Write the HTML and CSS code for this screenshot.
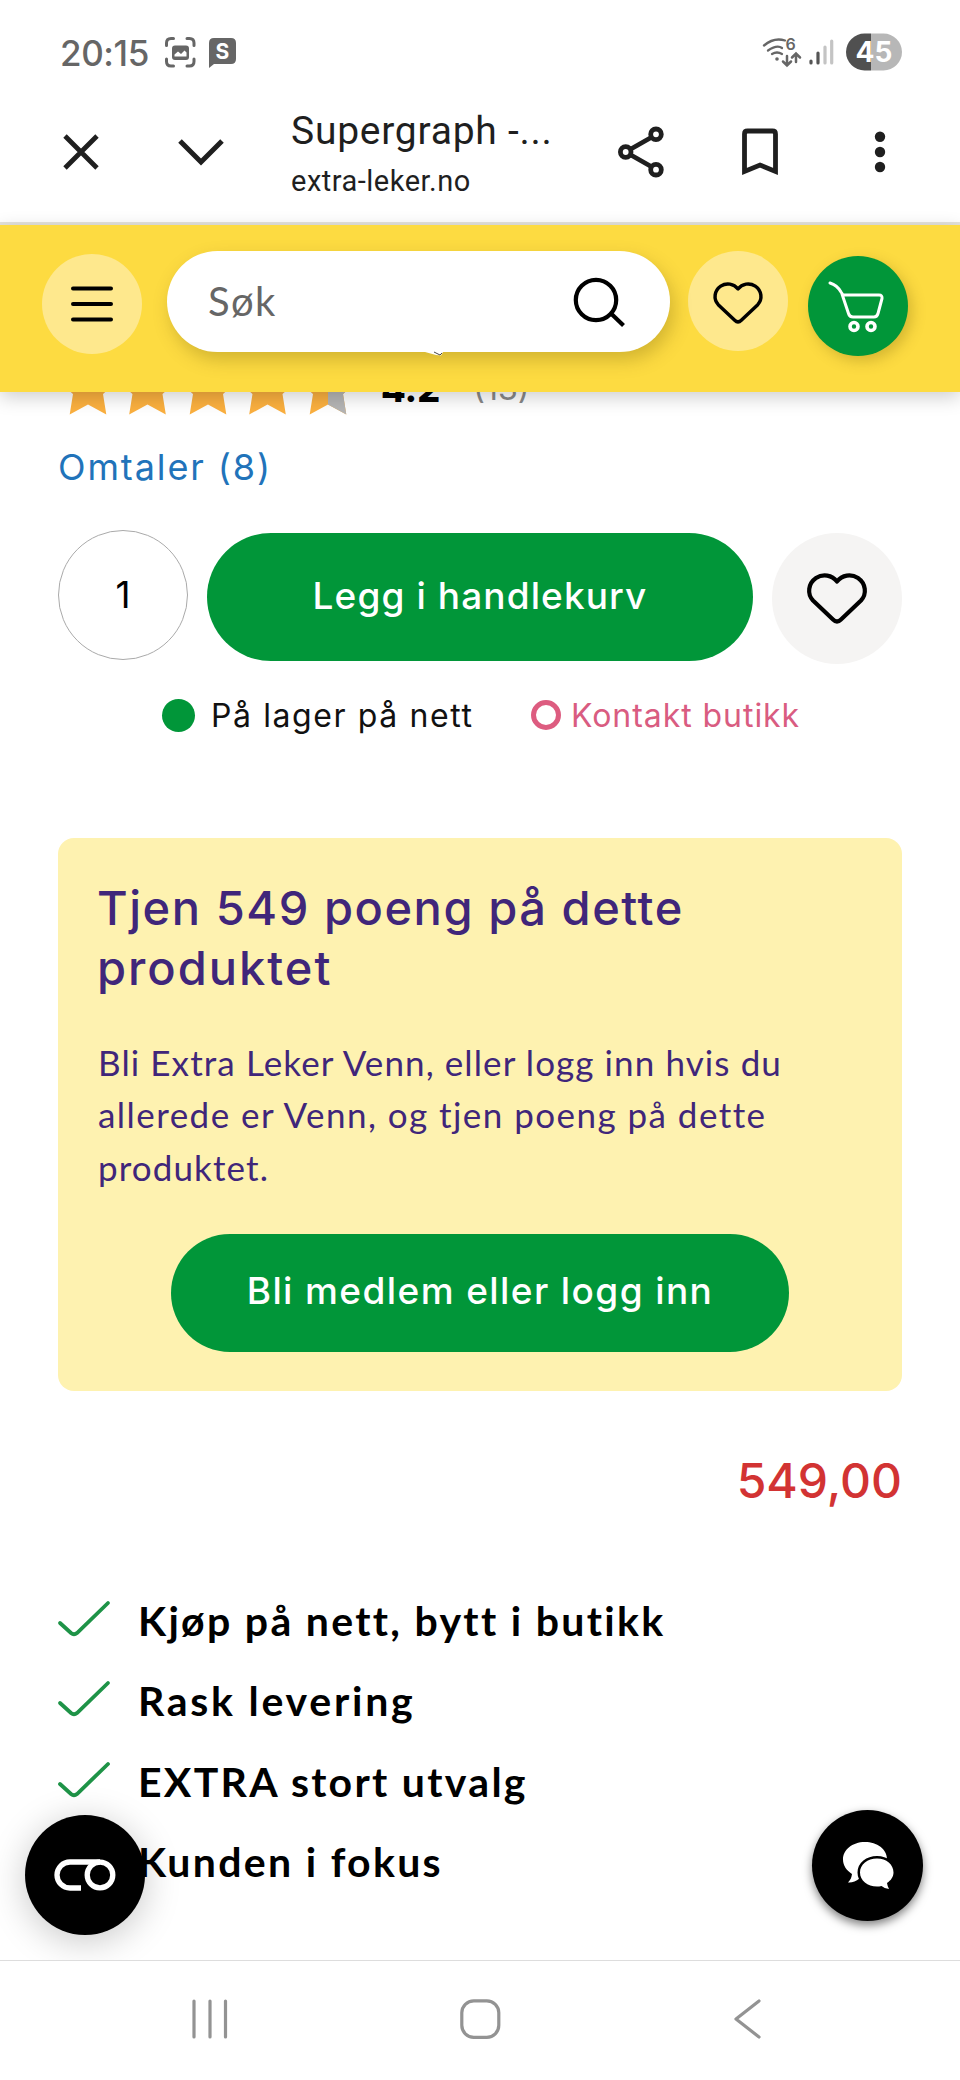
FILE: index.html
```html
<!DOCTYPE html>
<html lang="no">
<head>
<meta charset="utf-8">
<title>Supergraph - Extra Leker</title>
<link rel="stylesheet" href="styles.css">
</head>
<body>
<div class="phone">
  <div class="status">
    <span class="clock">20:15</span>
    <svg class="status-left" width="74" height="34" viewBox="0 0 74 34">
      <g fill="none" stroke="#666" stroke-width="3" stroke-linecap="round"><path d="M2.500 9.500V7q0-4.500 4.500-4.500h2.500M23 2.500h2.500q4.500 0 4.500 4.500v2.500M30 23v2.500q0 4.500-4.500 4.500H23M9.500 30H7q-4.500 0-4.500-4.500V23"/></g>
      <rect x="8" y="9.500" width="17" height="14.500" rx="3" fill="#666"/>
      <path d="M10.500 20.500v-2l3.500-3 3 2.500 3.500-3.500 2 2v4z" fill="#fff"/>
      <path d="M50 2h17q5 0 5 5v16q0 5-5 5H50l-5 4V7q0-5 5-5z" fill="#666"/>
      <text x="58.500" y="22.500" text-anchor="middle" class="badge-s">S</text>
    </svg>
    <svg class="status-right" width="144" height="40" viewBox="0 0 144 40">
      <g fill="none" stroke="#666" stroke-width="2.300" stroke-linecap="round">
        <path d="M3 12.500Q13 4 24 7.500M7 17.500q9-6 14-2.500M11 21q5-3 10 0"/>
        <path d="M26 23v9.500m-4-4 4 4 4-4M35 29v-8.500m-4 4 4-4 4 4" stroke-width="2.500"/>
      </g>
      <circle cx="16" cy="26" r="1.800" fill="#666"/>
      <text x="29.500" y="17" text-anchor="middle" class="wifi-six">6</text>
      <g stroke-width="3.200" stroke-linecap="round"><path d="M50 28v2M57 20v10" stroke="#555"/><path d="M64 14v16M70.700 8v22" stroke="#c4c4c4"/></g>
      <path d="M110 .500h-6.500a18.500 18.500 0 0 0 0 37h6.500z" fill="#505050"/>
      <path d="M110 .500h12.500a18.500 18.500 0 0 1 0 37H110z" fill="#b7b7b7"/>
      <text x="113" y="29" text-anchor="middle" class="battery">45</text>
    </svg>
  </div>

  <div class="toolbar">
    <svg class="tool-close" width="36" height="36" viewBox="0 0 36 36"><path d="M2 2l32 32M34 2L2 34" stroke="#1f1f1f" stroke-width="4.800"/></svg>
    <svg class="tool-down" width="46" height="28" viewBox="0 0 46 28"><path d="M2 3l21 21L44 3" fill="none" stroke="#1f1f1f" stroke-width="5"/></svg>
    <div class="page-id"><div class="page-title">Supergraph -...</div><div class="page-url">extra-leker.no</div></div>
    <svg class="tool-share" width="46" height="52" viewBox="0 0 46 52" fill="none" stroke="#1f1f1f" stroke-width="4.800"><path d="M12 23.500 34 11M12 28.500 34 41"/><circle cx="7.700" cy="26" r="5.300"/><circle cx="38" cy="8.300" r="5.300"/><circle cx="38" cy="43.700" r="5.300"/></svg>
    <svg class="tool-mark" width="36" height="48" viewBox="0 0 36 48"><path d="M2.500 43.500V6q0-3 3-3h25q3 0 3 3v37.500L18 37z" fill="none" stroke="#1f1f1f" stroke-width="4.800"/></svg>
    <svg class="tool-more" width="12" height="42" viewBox="0 0 12 42" fill="#1f1f1f"><circle cx="6" cy="5.700" r="5.200"/><circle cx="6" cy="21" r="5.200"/><circle cx="6" cy="36" r="5.200"/></svg>
  </div>

  <header class="shop-bar">
    <div class="round menu"><svg width="42" height="36" viewBox="0 0 42 36"><path d="M2 2.500h38M2 18h38M2 33.500h38" stroke="#000" stroke-width="4" stroke-linecap="round"/></svg></div>
    <div class="search"><span>Søk</span><svg width="52" height="50" viewBox="0 0 52 50" fill="none" stroke="#000" stroke-width="4.200"><circle cx="23" cy="23" r="20.200"/><path d="M37.500 36 50.500 48.500"/></svg><svg class="under-bit" width="20" height="5" viewBox="0 0 20 5"><path d="M0 0h18l-2 3.500-5-.5z" fill="#fff"/><path d="M9 0l6 3 2-2" fill="none" stroke="#444" stroke-width="1"/></svg></div>
    <div class="round wish"><svg width="50" height="42" viewBox="0 0 60 51"><path class="heart" d="M30 8.500C25 2 16 .500 9 5 1 10.500 0 21 6 27.500L26 46.500q4 4 8 0L54 27.500C60 21 59 10.500 51 5 44 .500 35 2 30 8.500z"/></svg></div>
    <div class="round cart"><svg width="56" height="52" viewBox="0 0 56 52" fill="none" stroke="#fff" stroke-width="3" stroke-linecap="round" stroke-linejoin="round"><path d="M2 3q7 2 11 9l2 3h36q3.500 0 3 3.500l-4 15q-1 3.500-4 3.500H25q-3.500 0-4.500-3.500L14 14"/><circle cx="26" cy="46.500" r="4" stroke-width="3.600"/><circle cx="43" cy="46.500" r="4" stroke-width="3.600"/></svg></div>
  </header>

  <main class="content">
    <div class="rating">
      <svg width="300" height="46" viewBox="0 0 300 46">
        <defs><path id="star" d="M0-12 9 8 30 11 15 24 18.300 44.500 0 34.500-18.300 44.500-15 24-30 11-9 8z"/><clipPath id="right-half"><path d="M0-15h32v62H0z"/></clipPath></defs>
        <g fill="#fbb03f"><use href="#star" x="30"/><use href="#star" x="89.500"/><use href="#star" x="150"/><use href="#star" x="209.500"/><use href="#star" x="270"/></g>
        <g transform="translate(270 0)"><use href="#star" fill="#b5b5b5" clip-path="url(#right-half)"/></g>
      </svg>
      <b class="score">4.2</b><span class="votes">(13)</span>
    </div>
    <a class="reviews">Omtaler (8)</a>
    <div class="buy">
      <div class="qty">1</div>
      <div class="add">Legg i handlekurv</div>
      <div class="save"><svg width="60" height="51" viewBox="0 0 60 51"><path class="heart" d="M30 8.500C25 2 16 .500 9 5 1 10.500 0 21 6 27.500L26 46.500q4 4 8 0L54 27.500C60 21 59 10.500 51 5 44 .500 35 2 30 8.500z"/></svg></div>
    </div>
    <div class="stock"><i class="dot"></i><span class="online">På lager på nett</span><i class="ring"></i><span class="store">Kontakt butikk</span></div>
    <section class="club">
      <h2>Tjen 549 poeng på dette<br><span class="h-end">produktet</span></h2>
      <p><span class="p1">Bli Extra Leker Venn, eller logg inn hvis du</span><br><span class="p2">allerede er Venn, og tjen poeng på dette</span><br><span class="p3">produktet.</span></p>
      <div class="join">Bli medlem eller logg inn</div>
    </section>
    <div class="price">549,00</div>
    <ul class="perks">
      <li><svg width="52" height="38" viewBox="0 0 52 38"><path d="M2 22l11 10q3 2.500 6 0L50 2"/></svg><span class="k1">Kjøp på nett, bytt i butikk</span></li>
      <li><svg width="52" height="38" viewBox="0 0 52 38"><path d="M2 22l11 10q3 2.500 6 0L50 2"/></svg><span class="k2">Rask levering</span></li>
      <li><svg width="52" height="38" viewBox="0 0 52 38"><path d="M2 22l11 10q3 2.500 6 0L50 2"/></svg><span class="k3">EXTRA stort utvalg</span></li>
      <li><svg width="52" height="38" viewBox="0 0 52 38"><path d="M2 22l11 10q3 2.500 6 0L50 2"/></svg><span class="k4">Kunden i fokus</span></li>
    </ul>
    <div class="consent"><svg width="62" height="32" viewBox="0 0 62 32" fill="none" stroke="#fff" stroke-width="5.300"><path d="M46 3H16a13 13 0 0 0 0 26h11"/><circle cx="46" cy="16" r="12.800"/></svg></div>
    <div class="chat"><svg width="52" height="50" viewBox="0 0 52 50"><path d="M23 1C10 1 1 9 1 18.500c0 6 3.500 11 9 14.500-.500 3.500-1.500 6-4 8.500q6 .5 11.500-4C26 38 45 30 45 18 45 8 35 1 23 1z" fill="#fff"/><path d="M35 17.500c-9.500 0-17 6-17 14s7.500 14 17 14c1.500 0 3 0 4.500-.500q3.500 3 7.500 3-1.500-2.500-2-6c4-2.500 6.500-6.500 6.500-10.500 0-8-7-14-16.500-14z" fill="#fff" stroke="#000" stroke-width="5" paint-order="stroke"/></svg></div>
  </main>

  <nav class="system">
    <svg width="38" height="40" viewBox="0 0 38 40" fill="none"><path d="M3 2v36M19 2v36M34.500 2v36"/></svg>
    <svg width="42" height="40" viewBox="0 0 42 40" fill="none"><rect x="1.800" y="1.800" width="37" height="36.500" rx="12"/></svg>
    <svg width="28" height="40" viewBox="0 0 28 40" fill="none"><path d="M26 2 3 20l23 18"/></svg>
  </nav>
</div>
</body>
</html>
```

FILE: styles.css
```css
* { box-sizing: border-box; }
body { margin: 0; background: #fff; font-family: Inter, "Open Sans", sans-serif; color: #000; }
svg { display: block; flex: none; overflow: visible; }
.phone { width: 960px; height: 2080px; overflow: hidden; display: flex; flex-direction: column; white-space: nowrap; }

.status { height: 80px; flex: none; display: flex; padding: 33px 55px 0 60px; color: #666; }
.clock { width: 104px; font-size: 35px; line-height: 40px; font-weight: 500; letter-spacing: -.4px; }
.status-left { margin-top: 3px; }
.status-right { margin: 0 0 0 auto; }
.badge-s { font: 700 21px Inter, sans-serif; fill: #fff; }
.wifi-six { font: 600 16px Inter, sans-serif; fill: #666; }
.battery { font: 700 28px Inter, sans-serif; fill: #fff; }

.toolbar { height: 145px; flex: none; display: flex; align-items: flex-start; padding-left: 63px; border-bottom: 3px solid #e4e3dd; color: #1f1f1f; font-family: Roboto, sans-serif; }
.tool-close { margin-top: 54px; }
.tool-down { margin: 58px 0 0 79px; }
.page-id { width: 327px; margin: 28px 0 0 67px; }
.page-title { font-size: 39px; line-height: 46px; letter-spacing: .75px; }
.page-url { font-size: 29px; line-height: 36px; margin-top: 9px; letter-spacing: .5px; }
.tool-share { margin-top: 46px; }
.tool-mark { margin: 48px 0 0 78px; }
.tool-more { margin: 51px 0 0 96px; }

.shop-bar { position: relative; z-index: 2; height: 167px; flex: none; display: flex; align-items: flex-start; padding-left: 42px; background: #fddb41; box-shadow: 0 5px 18px rgba(0,0,0,.2); }
.round { width: 100px; height: 100px; border-radius: 50%; display: flex; align-items: center; justify-content: center; background: #fee88d; }
.menu { margin-top: 29px; }
.search { position: relative; width: 503px; height: 101px; margin: 26px 0 0 25px; padding: 0 45px 0 41px; border-radius: 51px; background: #fff; display: flex; align-items: center; justify-content: space-between; color: #666; font: 40px/48px Lato, sans-serif; letter-spacing: 1.400px; box-shadow: 4px 8px 18px rgba(90,70,0,.26); }
.search span { margin-top: -2px; }
.under-bit { position: absolute; left: 258px; top: 101px; }
.wish { margin: 26px 0 0 18px; padding-top: 3px; }
.heart { fill: none; stroke: #000; stroke-width: 4.200; stroke-linejoin: round; }
.cart { margin: 31px 0 0 20px; padding-right: 4px; background: #019639; box-shadow: 4px 5px 14px rgba(90,70,0,.25); }

.content { position: relative; flex: 1; padding: 0 58px; }
.rating { display: flex; height: 24px; align-items: flex-end; }
.score { margin-left: 23px; font-size: 36px; line-height: 40px; font-weight: 800; margin-bottom: 7px; }
.votes { margin: 0 0 9px 33px; font-size: 32px; line-height: 36px; color: #888; }
.reviews { display: block; margin-top: 29px; font-size: 36px; line-height: 44px; color: #2173ba; letter-spacing: 1.900px; }
.buy { margin-top: 41px; display: flex; align-items: flex-start; }
.qty { width: 130px; height: 130px; border: 1.500px solid #aaa; border-radius: 50%; text-align: center; font-size: 37px; line-height: 128px; }
.add { width: 546px; height: 128px; margin: 3px 19px 0; border-radius: 64px; background: #019639; color: #fff; font-size: 37px; line-height: 126px; font-weight: 500; text-align: center; letter-spacing: 1.100px; }
.save { width: 130px; height: 131px; margin-top: 3px; border-radius: 50%; background: #f5f4f3; display: flex; align-items: center; justify-content: center; }
.stock { height: 40px; margin-top: 31px; padding-left: 104px; display: flex; align-items: center; font-size: 32px; color: #111; }
.dot { width: 33px; height: 33px; border-radius: 50%; background: #019639; }
.online { width: 318px; padding-left: 16px; letter-spacing: 1.600px; }
.ring { width: 30px; height: 30px; margin-left: 18px; border: 5px solid #dd5c80; border-radius: 50%; }
.store { margin-left: 10px; color: #d95c81; letter-spacing: .95px; }

.club { height: 553px; margin-top: 103px; padding: 40px 40px 0; border-radius: 16px; background: #fef2b0; color: #40267a; }
h2 { margin: 0 0 0 -1px; font-size: 47px; line-height: 59.500px; font-weight: 500; letter-spacing: 1.550px; }
.h-end { letter-spacing: 2px; }
p { margin: 39px 0 0; font: 35px/52.400px Lato, sans-serif; letter-spacing: 1.100px; }
.p2 { letter-spacing: 1.450px; }
.join { width: 618px; height: 118px; margin: 41px auto 0; border-radius: 59px; background: #019639; color: #fff; font-size: 37px; line-height: 114px; font-weight: 500; text-align: center; letter-spacing: 1.400px; }
.price { margin-top: 60px; text-align: right; font-size: 48px; line-height: 60px; font-weight: 500; color: #d23333; }
.perks { list-style: none; margin: 70px 0 0; padding: 0; font: 700 41px/80.300px Lato, sans-serif; letter-spacing: 2.300px; }
.perks li { display: flex; height: 80.300px; gap: 28px; }
.k2 { letter-spacing: 2.750px; }
.perks svg { margin-top: 20px; fill: none; stroke: #1e9347; stroke-width: 3.800; stroke-linecap: round; }
.consent, .chat { position: absolute; display: flex; align-items: center; justify-content: center; border-radius: 50%; background: #000; }
.consent { left: 25px; top: 1423px; width: 120px; height: 120px; box-shadow: 0 6px 36px rgba(0,0,0,.22); }
.chat { left: 812px; top: 1418px; width: 111px; height: 111px; box-shadow: 0 4px 10px rgba(0,0,0,.5); }

.system { height: 120px; flex: none; position: relative; border-top: 1.500px solid #ddd; background: #fff; display: flex; align-items: center; padding: 0 199px 4px 191px; justify-content: space-between; }
.system path, .system rect { stroke: #939393; stroke-width: 3.200; stroke-linecap: round; stroke-linejoin: round; }
```
